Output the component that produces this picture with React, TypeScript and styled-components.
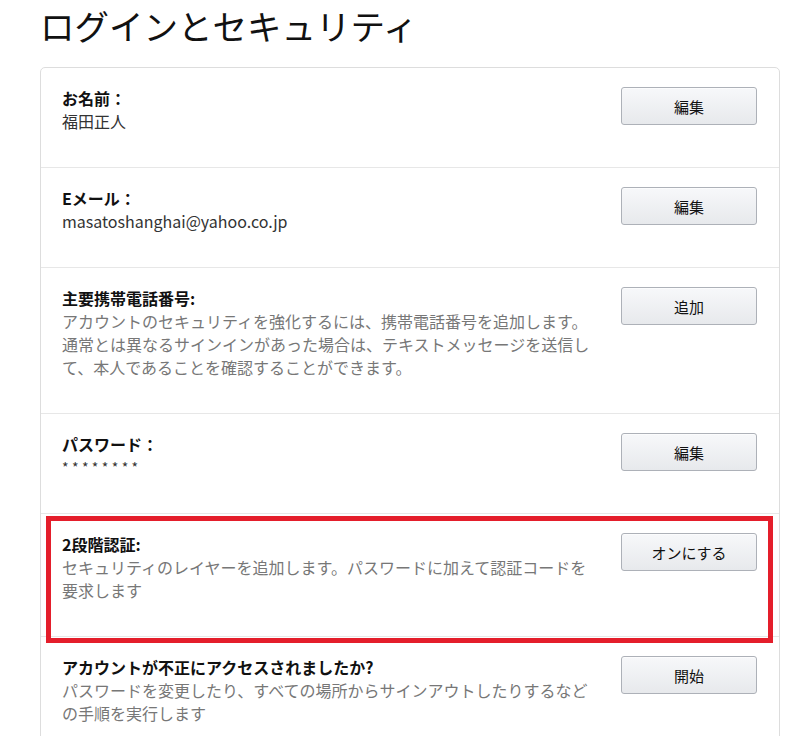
import React from "react";
import styled, { createGlobalStyle } from "styled-components";

const GlobalStyle = createGlobalStyle`
  html, body {
    margin: 0;
    padding: 0;
    background: #ffffff;
  }
  body {
    font-family: "Noto Sans CJK JP", "Noto Sans", sans-serif;
    color: #111111;
  }
`;

const Page = styled.div`
  padding: 0 0 0 40px;
  width: 740px;
`;

const Heading = styled.h1`
  margin: 0 0 17px;
  font-size: 34.5px;
  line-height: 50px;
  font-weight: 400;
  color: #111111;
`;

const Card = styled.div`
  border: 1px solid #dddddd;
  border-radius: 5px;
  background: #ffffff;
`;

const Row = styled.div`
  position: relative;
  display: flex;
  align-items: flex-start;
  padding: 19px 22px 34px 21px;
  border-bottom: 1px solid #e7e7e7;

  &:last-child {
    border-bottom: none;
  }
`;

/* red annotation frame drawn over a row */
const Highlight = styled.div`
  position: absolute;
  top: 2px;
  left: 5px;
  right: 6px;
  bottom: -7px;
  border: 5px solid #e41e2b;
  pointer-events: none;
  z-index: 2;
`;

const Info = styled.div`
  flex: 0 0 532px;
  font-size: 16px;
  line-height: 23px;
`;

const Label = styled.div`
  height: 23px;
  font-weight: 700;
  color: #111111;
`;

const Value = styled.div`
  height: 23px;
  color: #333333;
`;

const Secret = styled.div`
  height: 23px;
  color: #333333;
  font-size: 14px;
  letter-spacing: 3.4px;
`;

const Description = styled.div`
  color: #777777;
`;

const ActionButton = styled.button`
  margin-left: auto;
  width: 136px;
  height: 38px;
  padding: 0;
  border: 1px solid #adb1b8;
  border-radius: 3px;
  background: linear-gradient(to bottom, #f7f8fa, #e7e9ec);
  box-shadow: 0 1px 0 rgba(255, 255, 255, 0.6) inset;
  font-family: inherit;
  font-size: 15px;
  color: #111111;
  cursor: pointer;
`;

type Item = {
  label: string;
  value?: string;
  secret?: string;
  description?: string;
  action: string;
  highlight?: boolean;
};

const items: Item[] = [
  { label: "お名前：", value: "福田正人", action: "編集" },
  { label: "Eメール：", value: "masatoshanghai@yahoo.co.jp", action: "編集" },
  {
    label: "主要携帯電話番号:",
    description:
      "アカウントのセキュリティを強化するには、携帯電話番号を追加します。通常とは異なるサインインがあった場合は、テキストメッセージを送信して、本人であることを確認することができます。",
    action: "追加",
  },
  { label: "パスワード：", secret: "********", action: "編集" },
  {
    label: "2段階認証:",
    description:
      "セキュリティのレイヤーを追加します。パスワードに加えて認証コードを要求します",
    action: "オンにする",
    highlight: true,
  },
  {
    label: "アカウントが不正にアクセスされましたか?",
    description:
      "パスワードを変更したり、すべての場所からサインアウトしたりするなどの手順を実行します",
    action: "開始",
  },
];

export default function App() {
  return (
    <>
      <GlobalStyle />
      <Page>
        <Heading>ログインとセキュリティ</Heading>
        <Card>
          {items.map((item) => (
            <Row key={item.label}>
              <Info>
                <Label>{item.label}</Label>
                {item.value && <Value>{item.value}</Value>}
                {item.secret && <Secret>{item.secret}</Secret>}
                {item.description && (
                  <Description>{item.description}</Description>
                )}
              </Info>
              <ActionButton>{item.action}</ActionButton>
              {item.highlight && <Highlight />}
            </Row>
          ))}
        </Card>
      </Page>
    </>
  );
}
